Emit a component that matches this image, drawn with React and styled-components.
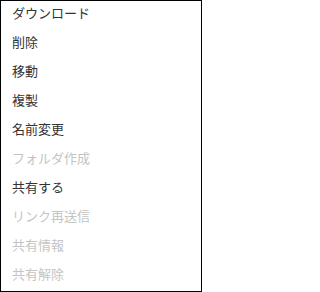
import React from "react";
import styled, { createGlobalStyle } from "styled-components";

const Global = createGlobalStyle`
  html, body { margin: 0; padding: 0; background: #fff; }
  * { box-sizing: border-box; }
`;

const Menu = styled.ul`
  list-style: none;
  margin: 0;
  padding: 0;
  width: 202px;
  height: 292px;
  border: 1px solid #000;
  background: #fff;
  display: flex;
  flex-direction: column;
`;

const Item = styled.li`
  height: 29px;
  line-height: 23px;
  padding: 0 0 6px 11px;
  font-family: "Noto Sans CJK JP", "Noto Sans", sans-serif;
  font-size: 13px;
  color: ${(p) => (p.$disabled ? "#c4c4c4" : "#333")};
  cursor: ${(p) => (p.$disabled ? "default" : "pointer")};
  white-space: nowrap;
`;

const items = [
  { label: "ダウンロード" },
  { label: "削除" },
  { label: "移動" },
  { label: "複製" },
  { label: "名前変更" },
  { label: "フォルダ作成", disabled: true },
  { label: "共有する" },
  { label: "リンク再送信", disabled: true },
  { label: "共有情報", disabled: true },
  { label: "共有解除", disabled: true },
];

export default function App() {
  return (
    <>
      <Global />
      <Menu>
        {items.map((it) => (
          <Item key={it.label} $disabled={it.disabled}>
            {it.label}
          </Item>
        ))}
      </Menu>
    </>
  );
}
